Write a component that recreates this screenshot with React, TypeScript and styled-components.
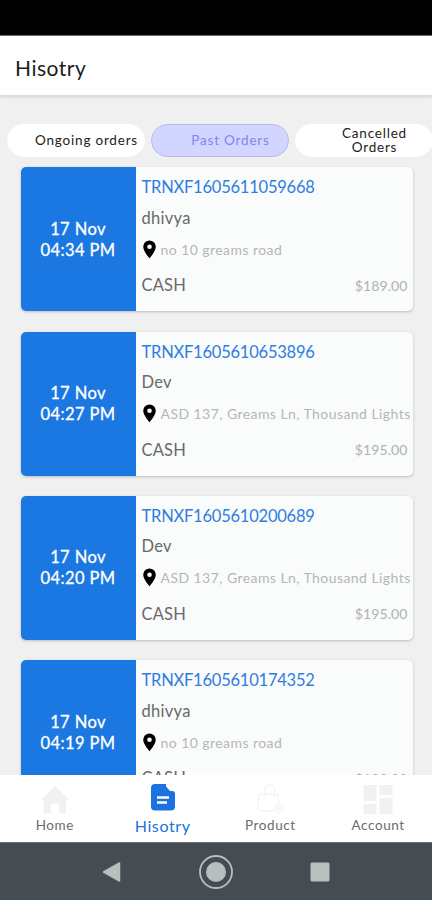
import React from "react";
import styled, { createGlobalStyle } from "styled-components";

const GlobalStyle = createGlobalStyle`
  * { box-sizing: border-box; }
  body { margin: 0; background: #f0f0f0; font-family: Lato, "Open Sans", sans-serif; }
`;

const Screen = styled.div`
  width: 432px;
  height: 900px;
  display: flex;
  flex-direction: column;
  overflow: hidden;
  background: #f0f0f0;
`;

const StatusBar = styled.div`
  flex: none;
  height: 36px;
  background: #000;
  border-bottom: 1px solid #6e6e6e;
`;

const Header = styled.header`
  flex: none;
  height: 60px;
  padding: 0 15px;
  display: flex;
  align-items: center;
  background: #fff;
  border-bottom: 1px solid #dcdcdc;
  box-shadow: 0 1px 3px rgba(0, 0, 0, 0.12);
`;

const Title = styled.h1`
  margin: 4px 0 0;
  font-size: 21px;
  font-weight: 400;
  line-height: 26px;
  letter-spacing: 0.5px;
  color: #1c1c1c;
`;

const Tabs = styled.nav`
  flex: none;
  display: flex;
  gap: 6px;
  padding: 28px 0 0 7px;
`;

const Tab = styled.button<{ $active?: boolean }>`
  flex: none;
  width: 138px;
  height: 33px;
  padding: 0 0 1px 21px;
  border: 1px solid ${(p) => (p.$active ? "#b9b9ee" : "#fff")};
  border-radius: 17px;
  background: ${(p) => (p.$active ? "#d2d5ff" : "#fff")};
  color: ${(p) => (p.$active ? "#8583f0" : "#222")};
  font: 400 13.5px/14px Lato, sans-serif;
  letter-spacing: 0.8px;
  text-align: center;
`;

const List = styled.main`
  flex: 1;
  min-height: 0;
  overflow: hidden;
  display: flex;
  flex-direction: column;
  gap: 20.3px;
  padding: 10.3px 19px 0 20.5px;
`;

const Card = styled.article`
  flex: none;
  height: 144px;
  display: flex;
  overflow: hidden;
  border-radius: 5px;
  background: #fafbfb;
  box-shadow: 0 1px 3px rgba(0, 0, 0, 0.22);
`;

const When = styled.div`
  flex: none;
  width: 115px;
  padding-top: 1px;
  display: flex;
  flex-direction: column;
  align-items: center;
  justify-content: center;
  background: #1b78e2;
  color: #fff;
  font-size: 16.5px;
  font-weight: 400;
  -webkit-text-stroke: 0.3px #fff;
  line-height: 21px;
  letter-spacing: 0.4px;
`;

const Details = styled.div`
  flex: 1;
  min-width: 0;
  display: flex;
  flex-direction: column;
  padding: 8px 5.5px 0 6px;
  white-space: nowrap;
`;

const OrderId = styled.div`
  height: 24px;
  line-height: 24px;
  font-size: 16.5px;
  letter-spacing: -0.22px;
  color: #2f7de0;
`;

const Customer = styled.div`
  height: 24px;
  margin-top: 6.5px;
  line-height: 24px;
  font-size: 16.5px;
  letter-spacing: 0.3px;
  color: #696969;
`;

const Address = styled.div`
  display: flex;
  align-items: center;
  gap: 5px;
  height: 20px;
  margin-top: 9.5px;
  font-size: 14px;
  letter-spacing: 0.44px;
  color: #b3b8b5;

  svg { flex: none; }
`;

const Payment = styled.div`
  display: flex;
  justify-content: space-between;
  align-items: center;
  height: 24px;
  margin-top: 14px;
  font-size: 16.5px;
  letter-spacing: 0.2px;
  color: #696969;
`;

const Price = styled.span`
  font-size: 14px;
  letter-spacing: 0.1px;
  color: #aeb3b0;
`;

const BottomNav = styled.nav`
  flex: none;
  height: 67px;
  display: grid;
  grid-template-columns: repeat(4, 1fr);
  padding-left: 1px;
  background: #fff;
`;

const NavItem = styled.a<{ $active?: boolean }>`
  display: flex;
  flex-direction: column;
  align-items: center;
  padding-top: 8px;
  color: ${(p) => (p.$active ? "#1b72e0" : "#6c6c6c")};
  font-size: ${(p) => (p.$active ? "16px" : "13.5px")};
  letter-spacing: 0.6px;
  line-height: 21px;

  svg { flex: none; }
`;

const SystemBar = styled.footer`
  flex: none;
  height: 58px;
  display: flex;
  justify-content: center;
  align-items: center;
  gap: 77px;
  background: #454c52;
  border-top: 1px solid #6b7176;
`;

const Pin = () => (
  <svg width="14" height="19" viewBox="0 0 14 19">
    <path fill="#000" fillRule="evenodd" d="M7.500 .5A6.300 6.300 0 0 0 1.200 6.800C1.200 11.300 7.500 18.300 7.500 18.300s6.300-7 6.300-11.500A6.300 6.300 0 0 0 7.500 .5Zm0 8.500a2.300 2.300 0 1 1 0-4.600A2.300 2.300 0 0 1 7.500 9Z" />
  </svg>
);

const HomeIcon = () => (
  <svg width="32" height="32" viewBox="0 0 32 32">
    <path fill="#f1f1f1" d="M16 3 1.500 17H4.500v12q0 1.500 1.500 1.500H12V22q0-1.500 1.500-1.500h5Q20 20.500 20 22v8.500h5.500q1.500 0 1.500-1.500V17h3.500Z" />
  </svg>
);

const HistoryIcon = () => (
  <svg width="32" height="32" viewBox="0 0 32 32">
    <path fill="#1b72e0" d="M8 1h11v2.500l4 4.500h2.500q2.500 0 2.500 2.500v13q0 4-4 4H8q-4 0-4-4V5q0-4 4-4Z" />
    <path stroke="#fff" strokeWidth="2.300" d="M10 14.500h12M10 19.500h10" />
  </svg>
);

const ProductIcon = () => (
  <svg width="32" height="32" viewBox="0 0 32 32" fill="none" stroke="#f4f4f4" strokeWidth="1.300">
    <path d="M10.500 14V7q0-5 5-5t5 5v7M20 28H7.500q-4 0-4-4L5 13.500Q5.300 11 8 11h13q2.500 0 3 2.500l1 8.500" />
    <circle cx="25" cy="26" r="4" />
    <path d="M25 24v4m-2-2h4" />
  </svg>
);

const AccountIcon = () => (
  <svg width="32" height="32" viewBox="0 0 32 32" fill="#f1f1f1">
    <path d="M1.500 2h13v16h-13zM17.500 2h13v10h-13zM1.500 21h13v10h-13zM17.500 15h13v16h-13z" />
  </svg>
);

const orders = [
  { id: "TRNXF1605611059668", name: "dhivya", address: "no 10 greams road", time: "04:34 PM", price: "$189.00" },
  { id: "TRNXF1605610653896", name: "Dev", address: "ASD 137, Greams Ln, Thousand Lights", time: "04:27 PM", price: "$195.00" },
  { id: "TRNXF1605610200689", name: "Dev", address: "ASD 137, Greams Ln, Thousand Lights", time: "04:20 PM", price: "$195.00" },
  { id: "TRNXF1605610174352", name: "dhivya", address: "no 10 greams road", time: "04:19 PM", price: "$189.00" },
];

export default function App() {
  return (
    <Screen>
      <GlobalStyle />
      <StatusBar />
      <Header>
        <Title>Hisotry</Title>
      </Header>
      <Tabs>
        <Tab>Ongoing orders</Tab>
        <Tab $active>Past Orders</Tab>
        <Tab>Cancelled<br />Orders</Tab>
      </Tabs>
      <List>
        {orders.map((o) => (
          <Card key={o.id}>
            <When>
              <span>17 Nov</span>
              <span>{o.time}</span>
            </When>
            <Details>
              <OrderId>{o.id}</OrderId>
              <Customer>{o.name}</Customer>
              <Address><Pin /><span>{o.address}</span></Address>
              <Payment><span>CASH</span><Price>{o.price}</Price></Payment>
            </Details>
          </Card>
        ))}
      </List>
      <BottomNav>
        <NavItem><HomeIcon />Home</NavItem>
        <NavItem $active><HistoryIcon />Hisotry</NavItem>
        <NavItem><ProductIcon />Product</NavItem>
        <NavItem><AccountIcon />Account</NavItem>
      </BottomNav>
      <SystemBar>
        <svg width="20" height="22" viewBox="0 0 20 22"><path d="m1.500 11 16-9v18Z" fill="#b9bebe" stroke="#b9bebe" strokeWidth="1.500" strokeLinejoin="round" /></svg>
        <svg width="34" height="34" viewBox="0 0 34 34">
          <circle cx="17" cy="17" r="16" fill="none" stroke="#b9bebe" strokeWidth="1.800" />
          <circle cx="17" cy="17" r="10" fill="#b9bebe" />
        </svg>
        <svg width="20" height="20" viewBox="0 0 20 20"><rect x=".5" y=".5" width="19" height="19" rx="1.500" fill="#b9bebe" /></svg>
      </SystemBar>
    </Screen>
  );
}
